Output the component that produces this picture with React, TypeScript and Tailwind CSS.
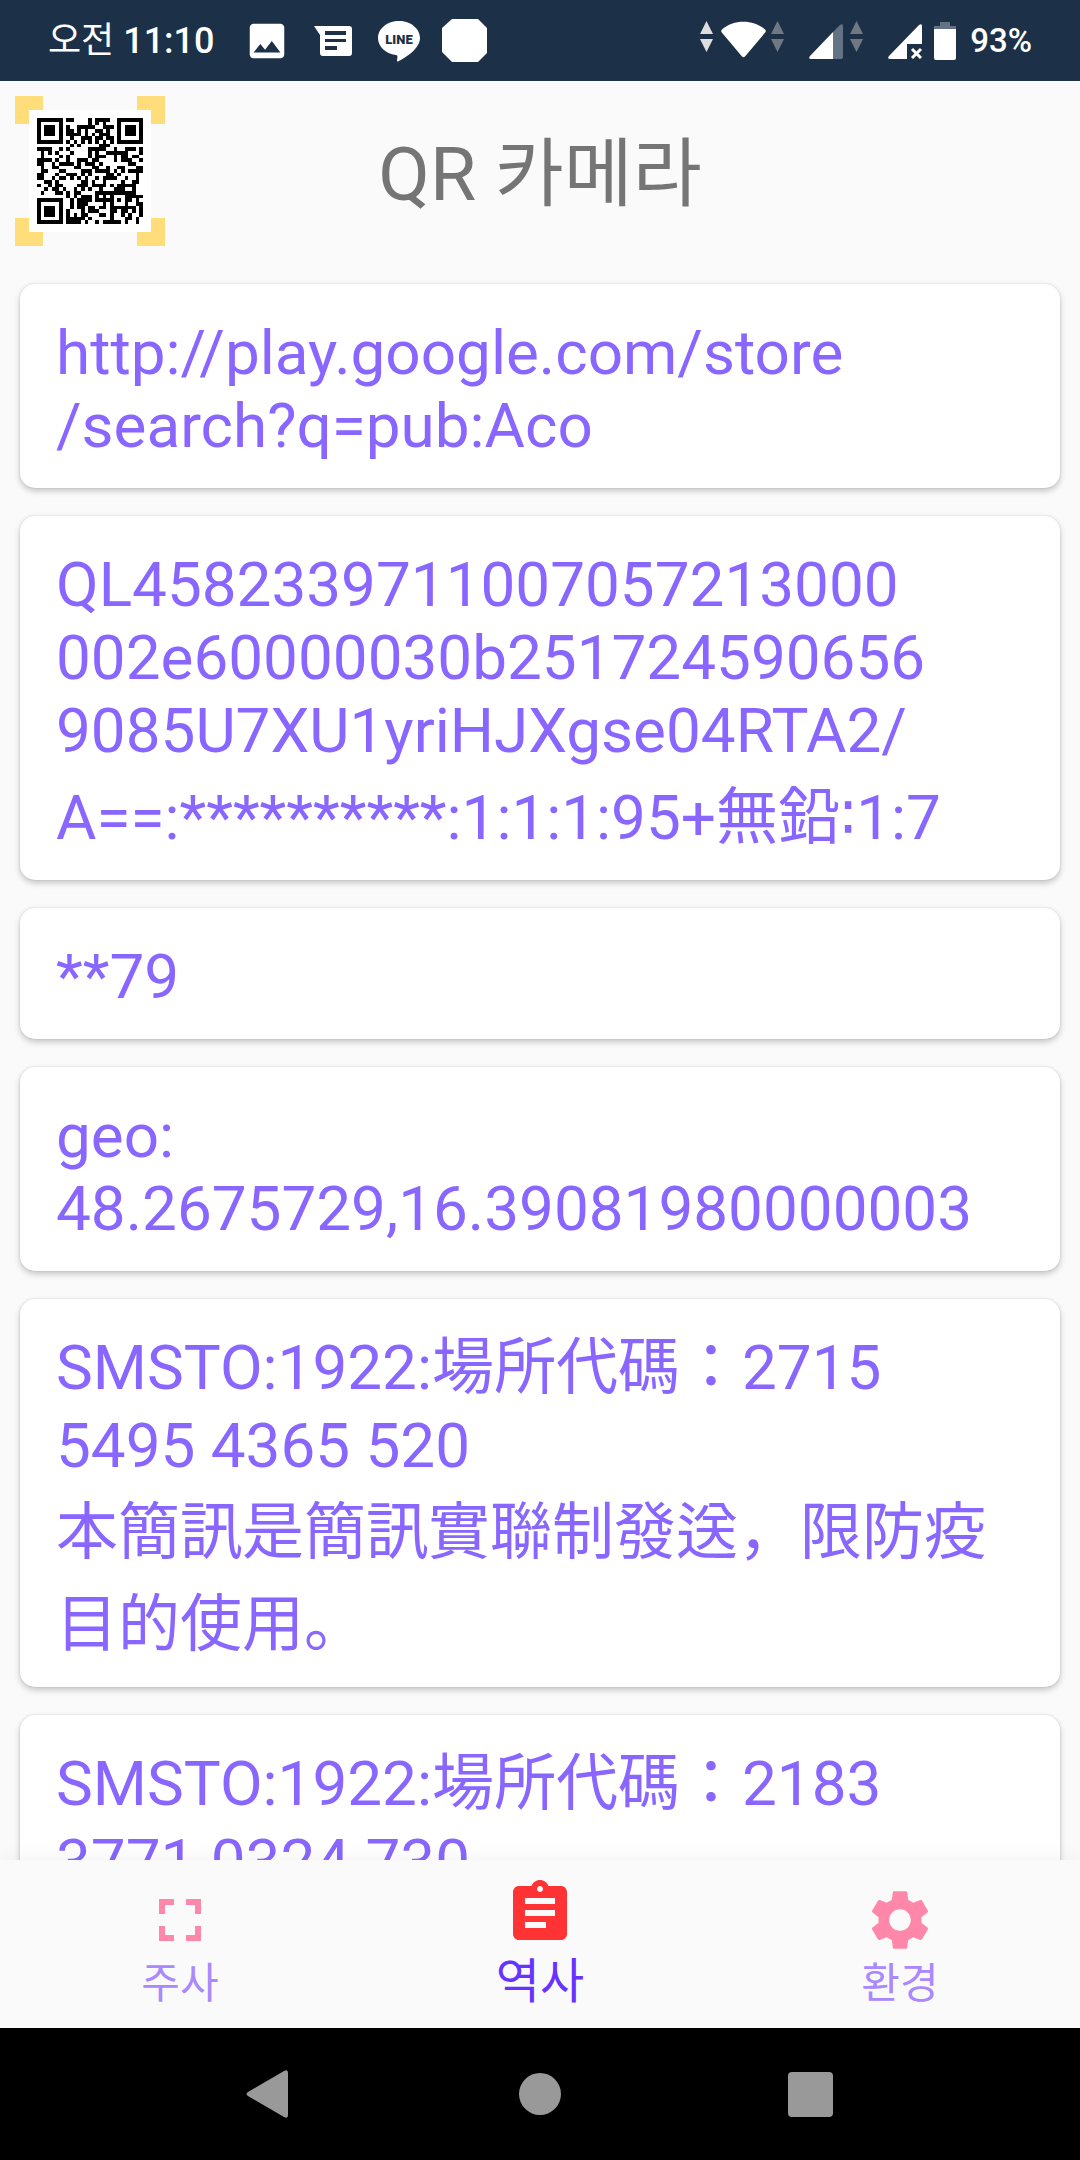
import type { ReactNode } from 'react';
import { MdAssignment, MdFullscreen, MdImage, MdSettings } from 'react-icons/md';

interface Line {
  text: string;
  // taller scripts push the line down a little
  pad?: string;
}

const HISTORY: Line[][] = [
  [{ text: 'http://play.google.com/store' }, { text: '/search?q=pub:Aco' }],
  [
    { text: 'QL4582339711007057213000' },
    { text: '002e60000030b251724590656' },
    { text: '9085U7XU1yriHJXgse04RTA2/' },
    { text: 'A==:**********:1:1:1:95+無鉛∶1:7', pad: 'pt-[14px]' },
  ],
  [{ text: '**79' }],
  [{ text: 'geo:' }, { text: '48.2675729,16.39081980000003' }],
  [
    { text: 'SMSTO:1922:場所代碼：2715' },
    { text: '5495 4365 520', pad: 'pt-[5px]' },
    { text: '本簡訊是簡訊實聯制發送，限防疫', pad: 'pt-[14px]' },
    { text: '目的使用。', pad: 'pt-[19px]' },
  ],
  [{ text: 'SMSTO:1922:場所代碼：2183' }, { text: '3771 0324 730', pad: 'pt-[5px]' }],
];

const QR_SIZE = 29;

// Version 3, level L: 55 data bytes, 15 check bytes
function qrCodewords(text: string): number[] {
  const bytes = Array.from(text, (c) => c.charCodeAt(0));
  let bits = '0100' + bytes.length.toString(2).padStart(8, '0');
  bytes.forEach((b) => (bits += b.toString(2).padStart(8, '0')));
  bits += '0000';
  const data: number[] = [];
  for (let i = 0; i < bits.length; i += 8) data.push(parseInt(bits.slice(i, i + 8), 2));
  for (let p = 0; data.length < 55; p++) data.push(p % 2 ? 0x11 : 0xec);

  const mul = (a: number, b: number) => {
    let r = 0;
    for (let i = 7; i >= 0; i--) {
      r = (r << 1) ^ ((r >> 7) * 0x11d);
      r ^= ((b >> i) & 1) * a;
    }
    return r;
  };
  const gen = new Array(15).fill(0);
  gen[14] = 1;
  let root = 1;
  for (let i = 0; i < 15; i++) {
    for (let j = 0; j < 15; j++) {
      gen[j] = mul(gen[j], root);
      if (j + 1 < 15) gen[j] ^= gen[j + 1];
    }
    root = mul(root, 2);
  }
  const check = new Array(15).fill(0);
  data.forEach((b) => {
    const f = b ^ check.shift();
    check.push(0);
    gen.forEach((g, i) => (check[i] ^= mul(g, f)));
  });
  return [...data, ...check];
}

function qrModules(text: string): boolean[][] {
  const grid: (boolean | null)[][] = Array.from({ length: QR_SIZE }, () => new Array(QR_SIZE).fill(null));
  const last = QR_SIZE - 1;

  for (let i = 0; i < QR_SIZE; i++) {
    grid[6][i] = i % 2 === 0;
    grid[i][6] = i % 2 === 0;
  }
  [[3, 3], [3, last - 3], [last - 3, 3]].forEach(([cy, cx]) => {
    for (let dy = -4; dy <= 4; dy++) {
      for (let dx = -4; dx <= 4; dx++) {
        const y = cy + dy;
        const x = cx + dx;
        const d = Math.max(Math.abs(dy), Math.abs(dx));
        if (y >= 0 && y <= last && x >= 0 && x <= last) grid[y][x] = d !== 2 && d !== 4;
      }
    }
  });
  for (let dy = -2; dy <= 2; dy++) {
    for (let dx = -2; dx <= 2; dx++) {
      grid[22 + dy][22 + dx] = Math.max(Math.abs(dy), Math.abs(dx)) !== 1;
    }
  }

  // format bits for level L, mask 3
  const format = Array.from('111100010011101', (c) => c === '1').reverse();
  for (let i = 0; i < 6; i++) grid[i][8] = format[i];
  grid[7][8] = format[6];
  grid[8][8] = format[7];
  grid[8][7] = format[8];
  for (let i = 9; i < 15; i++) grid[8][14 - i] = format[i];
  for (let i = 0; i < 8; i++) grid[8][last - i] = format[i];
  for (let i = 8; i < 15; i++) grid[QR_SIZE - 15 + i][8] = format[i];
  grid[QR_SIZE - 8][8] = true;

  const words = qrCodewords(text);
  let n = 0;
  for (let right = last; right >= 1; right -= 2) {
    if (right === 6) right = 5;
    for (let v = 0; v < QR_SIZE; v++) {
      for (let j = 0; j < 2; j++) {
        const x = right - j;
        const y = ((right + 1) & 2) === 0 ? last - v : v;
        if (grid[y][x] !== null) continue;
        const bit = n < words.length * 8 && ((words[n >> 3] >> (7 - (n & 7))) & 1) === 1;
        grid[y][x] = bit !== ((x + y) % 3 === 0);
        n++;
      }
    }
  }
  return grid as boolean[][];
}

const QR_PATH = qrModules('http://play.google.com/store/search?q=pub:Aco')
  .flatMap((row, y) => row.map((on, x) => (on ? `M${x} ${y}h1v1h-1z` : '')))
  .join('');

function QrLogo() {
  return (
    <svg className="size-[150px]" viewBox="0 0 150 150" shapeRendering="crispEdges" aria-hidden="true">
      <path fill="#ffdd7b" d="M0 0h28v28H0zM122 0h28v28h-28zM0 122h28v28H0zM122 122h28v28h-28z" />
      <path fill="#fff" d="M14 14h122v122H14z" />
      <svg x="22" y="22" width="106" height="106" viewBox="0 0 29 29">
        <path d={QR_PATH} />
      </svg>
    </svg>
  );
}

function Traffic({ className }: { className: string }) {
  return (
    <svg className={`h-[39px] w-[13px] ${className}`} viewBox="0 0 13 39" fill="currentColor">
      <path d="M6.5 0 13 13H0zM6.5 31 13 18H0z" />
    </svg>
  );
}

function StatusBar() {
  return (
    <div className="flex h-[81px] shrink-0 items-center bg-[#1c3148] px-12 text-white">
      <span className="text-[36px] leading-[42px] font-medium">
        <span className="font-normal">오전</span> 11:10
      </span>
      <div className="ml-[29px] flex items-center gap-5">
        <MdImage className="size-[46px]" />
        <svg className="size-[46px]" viewBox="0 0 46 46" fill="currentColor">
          <path
            fillRule="evenodd"
            d="M4 8h35a3 3 0 0 1 3 3v24a3 3 0 0 1-3 3H13a3 3 0 0 1-3-3V17zM15 13v4h21v-4zM15 21v3h21v-3zM15 28v4h12v-4z"
          />
        </svg>
        <svg className="size-[46px]" viewBox="0 0 46 46">
          <path
            fill="#fff"
            d="M23 3C11.500 3 2 10.500 2 20c0 8.500 7.500 15.500 17.800 17 1.600.300 1.800 1 1.600 2.500l-.4 3c-.1.900.5 1.200 1.500.700C29 40 44 31 44 20 44 10.500 34.500 3 23 3z"
          />
          <text x="23" y="26" textAnchor="middle" fill="#1c3148" fontSize="13" fontWeight="900" className="font-['Roboto']">
            LINE
          </text>
        </svg>
        <svg className="size-[46px]" viewBox="0 0 46 46" fill="currentColor">
          <path d="M10 1h26l9 9v25l-9 9H10l-10-10V10z" />
        </svg>
      </div>
      <div className="ml-auto flex items-center">
        <Traffic className="text-[#dedede]" />
        <svg className="ml-2 h-[40px] w-[45px]" viewBox="0 0 45 40" fill="currentColor">
          <path d="M1 8.500C12-2 33-2 44 8.500q1.500 1.500.2 3L24 35.500q-1.500 1.500-3 0L.8 11.500Q-.5 10 1 8.500z" />
        </svg>
        <Traffic className="ml-[5px] text-[#707981]" />
        <svg className="ml-[25px] h-[36px] w-[34px]" viewBox="0 0 34 36">
          <path fill="#647285" d="M24 9 31 2q3-2 3 1v31q0 2-2 2h-8z" />
          <path fill="#fff" d="M24 9v27H2q-3 0-1-3z" />
        </svg>
        <Traffic className="ml-[7px] text-[#707981]" />
        <svg className="ml-[25px] h-[36px] w-[34px]" viewBox="0 0 34 36">
          <path fill="#fff" d="M31 2q3-2 3 1v18H19v15H2q-3 0-1-3z" />
          <path stroke="#fff" strokeWidth="3" fill="none" d="m24 26 9 9m0-9-9 9" />
        </svg>
        <svg className="ml-3 h-[40px] w-[22px]" viewBox="0 0 22 40">
          <path fill="#647285" d="M6 1h10v4h6v4H0V5h6z" />
          <path fill="#fff" d="M0 8h22v29q0 2-2 2H2q-2 0-2-2z" />
        </svg>
        <span className="ml-[14px] pt-px text-[33px] leading-[42px] font-medium">93%</span>
      </div>
    </div>
  );
}

function HistoryCard({ lines }: { lines: Line[] }) {
  return (
    <li className="rounded-[15px] bg-white px-9 pt-8 pb-[26px] shadow-[0_3px_6px_rgba(0,0,0,0.22),0_0_2px_rgba(0,0,0,0.14)]">
      {lines.map((line) => (
        <p key={line.text} className={`whitespace-nowrap ${line.pad ?? ''}`}>
          {line.text}
        </p>
      ))}
    </li>
  );
}

interface TabProps {
  label: string;
  active?: boolean;
  children: ReactNode;
}

function Tab({ label, active = false, children }: TabProps) {
  return (
    <button
      type="button"
      aria-current={active ? 'page' : undefined}
      className={`flex flex-1 flex-col items-center ${
        active ? 'pt-[17px] text-[48px] leading-[66px] text-[#6633ff]' : 'pt-6 text-[42px] leading-[56px] text-[#aa88ff]'
      }`}
    >
      {children}
      <span>{label}</span>
    </button>
  );
}

export default function App() {
  return (
    <div
      lang="ko"
      className="flex h-screen flex-col overflow-hidden bg-[#fafafa] font-['Roboto','Noto_Sans_CJK_KR',sans-serif]"
    >
      <StatusBar />
      <header className="grid shrink-0 grid-cols-[150px_1fr_150px] items-center p-[15px]">
        <QrLogo />
        <h1 className="pt-1.5 text-center text-[75px] leading-[88px] text-[#757575]">QR 카메라</h1>
      </header>
      <main className="min-h-0 flex-1 overflow-hidden px-5 pt-[23px]">
        <ul className="flex flex-col gap-7 font-['Roboto','DejaVu_Sans','Noto_Sans_CJK_KR',sans-serif] text-[62px] leading-[73px] text-[#8866ff]">
          {HISTORY.map((lines) => (
            <HistoryCard key={lines[0].text} lines={lines} />
          ))}
        </ul>
      </main>
      <nav className="relative flex h-[168px] shrink-0 bg-[#fafafa] shadow-[0_0_20px_rgba(0,0,0,0.06)]">
        <Tab label="주사">
          <MdFullscreen className="size-[72px] text-[#ff88aa]" />
        </Tab>
        <Tab label="역사" active>
          <MdAssignment className="size-[72px] text-[#ff3333]" />
        </Tab>
        <Tab label="환경">
          <MdSettings className="size-[72px] text-[#ff88aa]" />
        </Tab>
      </nav>
      <div className="relative flex h-[132px] shrink-0 items-center justify-center bg-black text-[#999999]">
        <button type="button" aria-label="뒤로" className="flex w-1/4 justify-center">
          <svg className="h-[50px] w-[48px]" viewBox="0 0 48 50" fill="currentColor">
            <path d="M2 23 38 2q4-2 4 2v42q0 4-4 2L2 27q-3-2 0-4z" />
          </svg>
        </button>
        <button type="button" aria-label="홈" className="flex w-1/4 justify-center">
          <span className="size-[42px] rounded-full bg-[#999999]" />
        </button>
        <button type="button" aria-label="최근 앱" className="flex w-1/4 justify-center">
          <span className="size-[45px] rounded-[4px] bg-[#999999]" />
        </button>
      </div>
    </div>
  );
}
